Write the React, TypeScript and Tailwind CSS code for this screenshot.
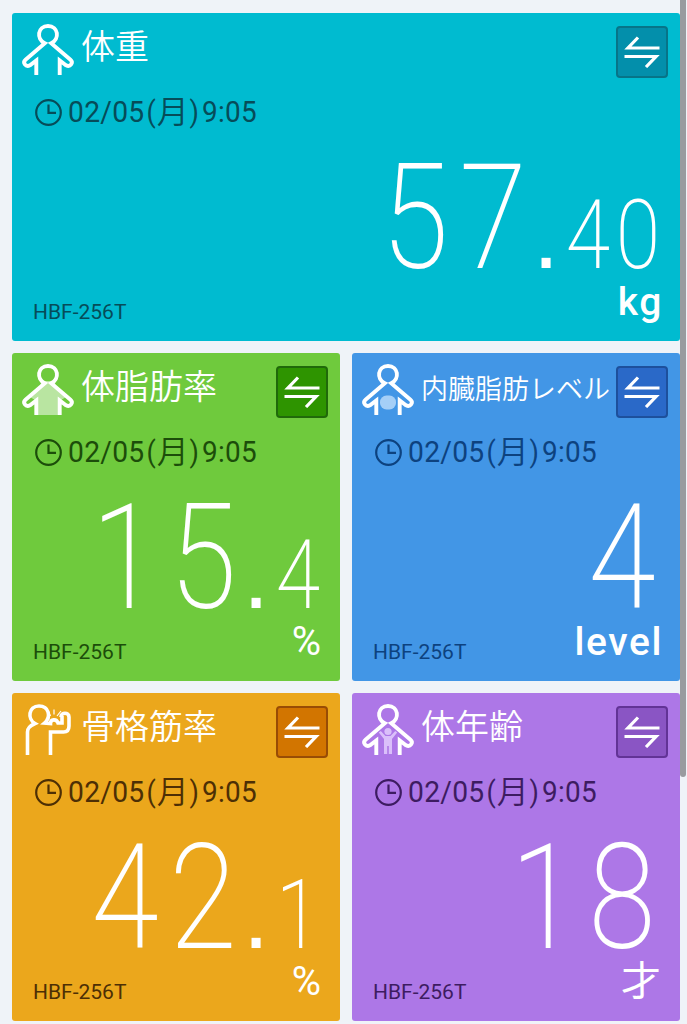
import type { ReactNode } from 'react';
import clsx from 'clsx';

type IconKind = 'weight' | 'fat' | 'visceral' | 'muscle' | 'age';

interface Metric {
  title: string;
  icon: IconKind;
  whole: string;
  fraction?: string;
  unit: string;
  card: string;
  dark: string;
  button: string;
  wide?: boolean;
}

const metrics: Metric[] = [
  {
    title: '体重',
    icon: 'weight',
    whole: '57',
    fraction: '40',
    unit: 'kg',
    card: 'bg-[#00bbd0]',
    dark: 'text-[#064c59]',
    button: 'bg-[#038fab] border-[#077488]',
    wide: true,
  },
  {
    title: '体脂肪率',
    icon: 'fat',
    whole: '15',
    fraction: '4',
    unit: '%',
    card: 'bg-[#6fca3d]',
    dark: 'text-[#1c4d0a]',
    button: 'bg-[#2e9400] border-[#20690a]',
  },
  {
    title: '内臓脂肪レベル',
    icon: 'visceral',
    whole: '4',
    unit: 'level',
    card: 'bg-[#4296e6]',
    dark: 'text-[#0d427f]',
    button: 'bg-[#2a69c8] border-[#1d509c]',
  },
  {
    title: '骨格筋率',
    icon: 'muscle',
    whole: '42',
    fraction: '1',
    unit: '%',
    card: 'bg-[#eba71c]',
    dark: 'text-[#4d2f05]',
    button: 'bg-[#d27500] border-[#984c05]',
  },
  {
    title: '体年齢',
    icon: 'age',
    whole: '18',
    unit: '才',
    card: 'bg-[#ad77e7]',
    dark: 'text-[#3d1c61]',
    button: 'bg-[#8a55c4] border-[#623396]',
  },
];

function BodyOutline({ children }: { children?: ReactNode }) {
  return (
    <>
      {children}
      <path
        d="M14.300 51V36.500L8 41.300C3.500 43.500.300 38.500 3.500 35.700L22.800 19.300C14 15 15.500 2 26 2s12 13 3.200 17.300L48.500 35.700C51.700 38.500 48.500 43.500 44 41.300L37.700 36.500V51"
        fill="none"
        stroke="white"
        strokeWidth="3.900"
      />
    </>
  );
}

function MetricIcon({ kind }: { kind: IconKind }) {
  return (
    <svg width="52" height="52" viewBox="0 0 52 52" className="shrink-0 overflow-visible">
      {kind === 'weight' && <BodyOutline />}
      {kind === 'fat' && (
        <BodyOutline>
          <path d="M20 17h12l3 7 9 9-6.500 4v14h-23V37L8 33l9-9z" fill="#b9e5a1" />
        </BodyOutline>
      )}
      {kind === 'visceral' && (
        <BodyOutline>
          <rect x="18" y="31.500" width="16" height="14" rx="6.500" fill="#a5cff7" />
        </BodyOutline>
      )}
      {kind === 'age' && (
        <BodyOutline>
          <g fill="#dabffa">
            <circle cx="26" cy="27.500" r="3.600" />
            <path d="M16.800 28.500l2-1.500 4.700 5h5l4.700-5 2 1.500-5.200 6.500v15h-3.200v-8h-1.600v8H22V35z" />
          </g>
        </BodyOutline>
      )}
      {kind === 'muscle' && (
        <g fill="none" stroke="white" strokeWidth="3.600">
          <path d="M5.500 51V28c0-4 2-6 7.500-8.500C5 15 6.500 2 17 2c10 0 12.500 11 5.500 17l6 .5c0-4.500 6-5 7.500-.5h4V12" />
          <path d="M28.500 51V28h13c4 0 5.500-2 5.500-6V13c0-5-8-5-8 0" />
          <path d="M28.500 12l-2-4M32 10.500V5.500M35 12l4-5" strokeWidth="1.200" />
        </g>
      )}
    </svg>
  );
}

function SwapButton({ className }: { className: string }) {
  return (
    <button
      className={clsx('flex size-[52px] shrink-0 items-center justify-center rounded border-2', className)}
    >
      <svg width="36" height="32" viewBox="0 0 36 32" fill="none" stroke="white" strokeWidth="3.200">
        <path d="M35.500 12H4L14 1.500M.5 20.500H32L22 31" />
      </svg>
    </button>
  );
}

function MeasuredAt() {
  return (
    <div className="mt-[14px] flex h-[40px] items-center pl-[23px]">
      <svg width="27" height="27" viewBox="0 0 27 27" fill="none" stroke="currentColor" strokeWidth="2.200">
        <circle cx="13.500" cy="13.500" r="12.300" />
        <path d="M13.500 5.500v8.300H21" />
      </svg>
      <span className="ml-[6px] flex items-center text-[30px] leading-[40px]">
        <span className="w-[78px] origin-left scale-x-[.94] tracking-[.3px]">02/05</span>
        <span className="flex w-[56px]">
          <span className="scale-x-[.9]">(</span>
          <span className="w-[33px] text-center text-[32px] font-[350]">月</span>
          <span className="scale-x-[.9]">)</span>
        </span>
        <span className="origin-left scale-x-[.93] tracking-[.3px]">9:05</span>
      </span>
    </div>
  );
}

function Reading({ whole, fraction }: { whole: string; fraction?: string }) {
  return (
    <div className="mt-[27px] flex h-[120px] items-baseline justify-end font-extralight text-white">
      {whole.split('').map((digit, i) => (
        <span
          key={i}
          className="flex w-[78px] scale-x-[.84] justify-center text-[146px] leading-[120px]"
        >
          {digit}
        </span>
      ))}
      {fraction ? (
        <>
          <span className="mr-[3px] flex w-[28px] justify-center font-['Liberation_Sans'] text-[94px] font-normal leading-[90px]">
            .
          </span>
          {fraction.split('').map((digit, i) => (
            <span key={i} className="flex w-[50px] scale-x-[.84] justify-center text-[96px] leading-[96px]">
              {digit}
            </span>
          ))}
          <span className="w-[17px]" />
        </>
      ) : (
        <span className="w-[19px]" />
      )}
    </div>
  );
}

function MetricCard({ metric }: { metric: Metric }) {
  const { title, icon, whole, fraction, unit, card, dark, button, wide } = metric;

  return (
    <section className={clsx('h-[328px] overflow-hidden rounded-[3px]', card, dark, wide && 'col-span-2')}>
      <div className="flex h-[65px] pt-[13px] pr-[12px] pl-[10px]">
        <div className="-mt-[2px]">
          <MetricIcon kind={icon} />
        </div>
        <h2
          className={clsx(
            'ml-[7px] grow whitespace-nowrap font-[350] text-white',
            title.length > 5 ? 'text-[27px] leading-[48px]' : 'text-[34px] leading-[42px]',
          )}
        >
          {title}
        </h2>
        <SwapButton className={button} />
      </div>
      <MeasuredAt />
      <Reading whole={whole} fraction={fraction} />
      <div className="flex h-[45px] items-end justify-between pr-[18px] pl-[21px]">
        <span className="text-[21px] leading-[24px]">HBF-256T</span>
        <span
          className={clsx(
            'leading-[44px] text-white',
            unit.length > 1 ? '-mr-px text-[39px] font-medium tracking-[1.600px]' : 'mr-px text-[40px] font-normal',
          )}
        >
          {unit}
        </span>
      </div>
    </section>
  );
}

export default function App() {
  return (
    <div className="flex h-[1024px] w-[687px] overflow-hidden bg-[#eff3f8] font-['Roboto','Noto_Sans_CJK_JP',sans-serif]">
      <main className="ml-[12px] grid w-[668px] shrink-0 grid-cols-2 content-start gap-[12px] pt-[13px]">
        {metrics.map((metric) => (
          <MetricCard key={metric.title} metric={metric} />
        ))}
      </main>
      <div className="h-[777px] w-[6px] rounded-b-full bg-[#999b9f]" />
    </div>
  );
}
